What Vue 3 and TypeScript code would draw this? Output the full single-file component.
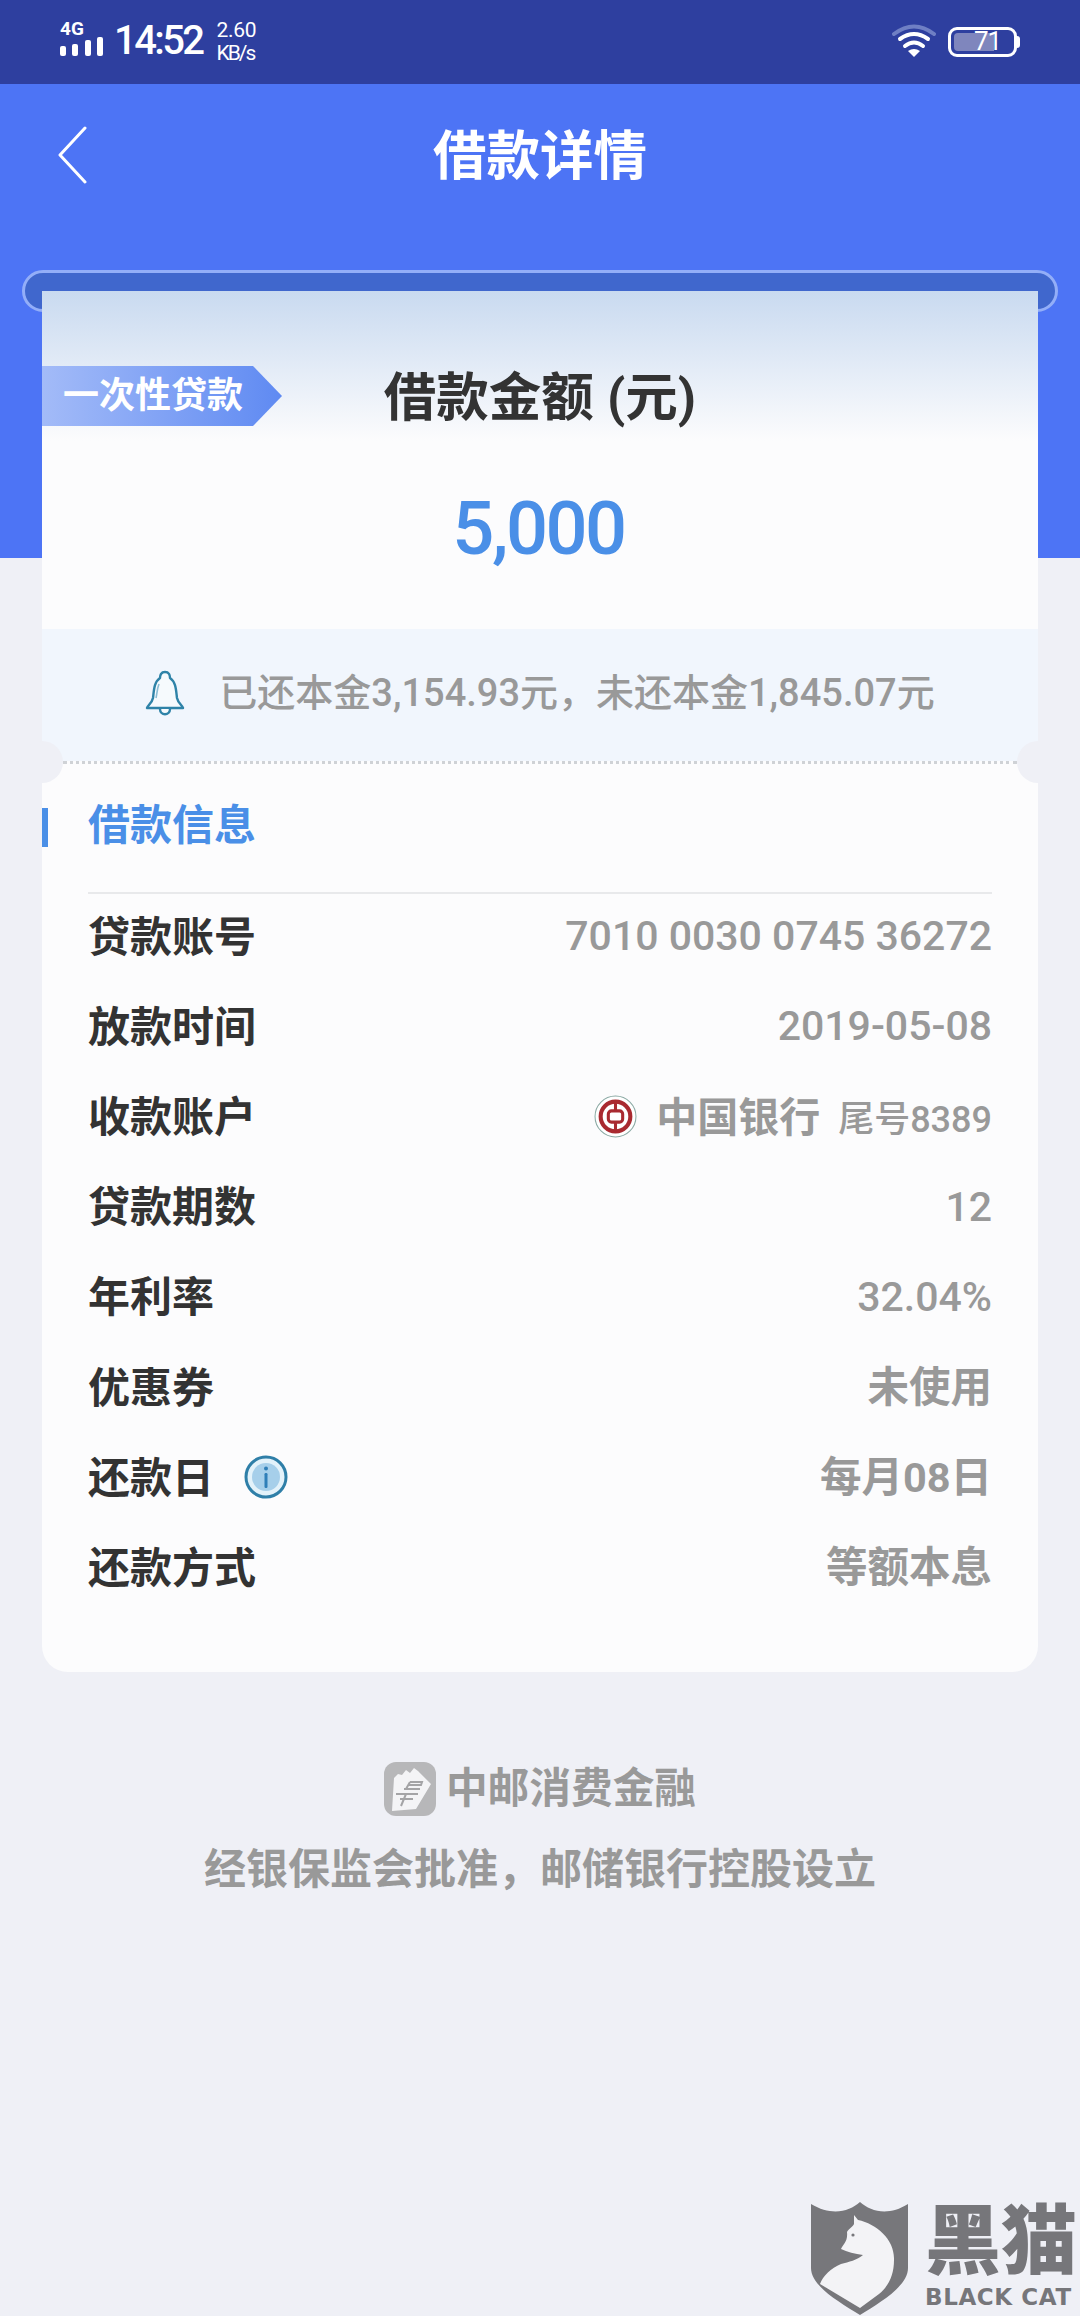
<template>
  <div class="page">
    <header class="hero">
      <div class="status">
        <div class="status__net">
          <span class="status__gen">4G</span>
          <div class="status__bars"><i v-for="n in 4" :key="n" :class="`bar bar--${n}`" /></div>
        </div>
        <span class="status__time">14:52</span>
        <div class="status__speed"><span>2.60</span><span class="status__unit">KB/s</span></div>
        <div class="status__right">
          <svg class="wifi" viewBox="0 0 44 36" fill="none" stroke="#fff" stroke-linecap="round">
            <path d="M2 10 Q22 -5 42 10" stroke="#6f7fc4" stroke-width="4" />
            <path d="M8 15 Q22 5 36 15" stroke-width="4" />
            <path d="M13 22 Q22 15 31 22" stroke-width="4" />
            <path d="M16 27 L22 33 L28 27 Q22 23 16 27 Z" fill="#fff" stroke="none" />
          </svg>
          <div class="battery">
            <div class="battery__fill" />
            <span class="battery__num">71</span>
          </div>
          <i class="battery__cap" />
        </div>
      </div>
      <nav class="nav">
        <svg class="nav__back" viewBox="0 0 30 58" fill="none">
          <path d="M28 2 L3 29 L28 56" stroke="#fff" stroke-width="3" stroke-linecap="round" stroke-linejoin="round" />
        </svg>
        <h1 class="nav__title">借款详情</h1>
      </nav>
      <div class="slot" />
    </header>

    <main class="card">
      <div class="summary">
        <div class="tag">一次性贷款</div>
        <p class="summary__label">借款金额 (元)</p>
        <p class="summary__amount">5,000</p>
      </div>

      <div class="notice">
        <svg class="notice__bell" viewBox="0 0 40 46" fill="#f6fafd" stroke="#2f83a8" stroke-width="2.4" stroke-linejoin="round">
          <path d="M20 2 C16 2 15 5 15 8 C9 12 9 20 8 28 C7 33 3 35 2 38 L38 38 C37 35 33 33 32 28 C31 20 31 12 25 8 C25 5 24 2 20 2 Z" />
          <path d="M15 39 C15 46 25 46 25 39" />
          <path d="M14 14 C12 19 12 24 11 28" fill="none" stroke="#8bbdd4" stroke-width="1.6" />
        </svg>
        <span class="notice__text">已还本金3,154.93元，未还本金1,845.07元</span>
      </div>

      <div class="perforation">
        <i class="perforation__hole perforation__hole--left" />
        <i class="perforation__hole perforation__hole--right" />
      </div>

      <section class="info">
        <h2 class="info__title">借款信息</h2>
        <ul class="rows">
          <li v-for="row in rows" :key="row.label" class="row">
            <span class="row__label">{{ row.label }}</span>
            <svg v-if="row.hint" class="row__hint" viewBox="0 0 44 44">
              <circle cx="22" cy="22" r="20" fill="#e3f2fa" stroke="#2f7fa8" stroke-width="3" />
              <circle cx="22" cy="22" r="14" fill="#a6cfea" />
              <rect x="20.5" y="18" width="3" height="15" rx="1.2" fill="#2f7fb8" />
              <circle cx="22" cy="13.5" r="2" fill="#2f7fb8" />
            </svg>
            <span v-if="row.bank" class="row__bank">
              <svg class="row__boc" viewBox="0 0 42 42" fill="none">
                <circle cx="21" cy="21" r="20" fill="#fff" stroke="#8aa9a3" stroke-width="1" />
                <circle cx="21" cy="21" r="14.5" stroke="#a92a30" stroke-width="4" />
                <rect x="14" y="15.5" width="14" height="11" rx="3" stroke="#a92a30" stroke-width="3" />
                <path d="M21 6 V15 M21 27 V36" stroke="#a92a30" stroke-width="3" />
              </svg>
              <span class="row__bank-name">中国银行</span>
              <span class="row__bank-tail">尾号8389</span>
            </span>
            <span v-else class="row__value" :class="{ 'row__value--cjk': row.cjk }">{{ row.value }}</span>
          </li>
        </ul>
      </section>
    </main>

    <footer class="foot">
      <div class="foot__brand">
        <svg class="foot__logo" viewBox="0 0 52 54">
          <rect width="52" height="54" rx="12" fill="#b7b7b9" />
          <path d="M10 16 L14 12 L18 13 L22 8 L26 11 L30 6 L34 9 L47 22 L32 47 L8 49 Z" fill="#f4f4f6" />
          <path d="M26 20 H38 L37 23 H25 M20 27 H36 M12 32 H34 M16 37 H29 M26 20 L22 27 M22 32 L17 44" stroke="#a4a4a6" stroke-width="2" fill="none" />
        </svg>
        <span>中邮消费金融</span>
      </div>
      <p class="foot__note">经银保监会批准，邮储银行控股设立</p>
    </footer>

    <div class="mark">
      <svg class="mark__shield" viewBox="0 0 98 114">
        <path d="M0 2 C20 14 38 10 49 0 C60 10 78 14 97 2 V66 C97 84 70 100 49 113 C28 100 0 84 0 66 Z" fill="#77777b" />
        <path d="M43 13 L47 18 C66 22 84 38 83 58 C83 72 78 84 68 92 L49 106 L9 82 C12 74 20 66 30 62 C38 60 46 58 52 53 C44 52 36 50 30 47 C32 42 37 40 36 30 C37 27 42 25 43 22 Z" fill="#f3f3f6" />
        <circle cx="42" cy="33" r="1.6" fill="#77777b" />
      </svg>
      <div class="mark__text">
        <span class="mark__cn">黑猫</span>
        <span class="mark__en">BLACK CAT</span>
      </div>
    </div>
  </div>
</template>

<script setup lang="ts">
interface InfoRow {
  label: string;
  value?: string;
  hint?: boolean;
  bank?: boolean;
  cjk?: boolean;
}

const rows: InfoRow[] = [
  { label: '贷款账号', value: '7010 0030 0745 36272' },
  { label: '放款时间', value: '2019-05-08' },
  { label: '收款账户', bank: true },
  { label: '贷款期数', value: '12' },
  { label: '年利率', value: '32.04%' },
  { label: '优惠券', value: '未使用', cjk: true },
  { label: '还款日', value: '每月08日', hint: true, cjk: true },
  { label: '还款方式', value: '等额本息', cjk: true },
];
</script>

<style>
html,
body {
  margin: 0;
  background: #eff0f6;
}
</style>

<style scoped>
.page {
  position: relative;
  width: 1080px;
  height: 2316px;
  overflow: hidden;
  background: #eff0f6;
  font-family: Roboto, "Noto Sans CJK SC", sans-serif;
}

.hero {
  position: relative;
  height: 558px;
  background: #4d74f5;
}

.status {
  display: flex;
  align-items: center;
  height: 84px;
  padding: 0 60px;
  box-sizing: border-box;
  background: #2e3f9f;
  color: #fff;
}
.status__net {
  display: flex;
  flex-direction: column;
  width: 43px;
  margin: 0 11px 8px 0;
}
.status__gen {
  font-size: 19px;
  font-weight: 700;
  line-height: 17px;
}
.status__bars {
  display: flex;
  justify-content: space-between;
  align-items: flex-end;
  height: 19px;
}
.bar {
  width: 6px;
  border-radius: 2px;
  background: #fff;
}
.bar--1 { height: 10px; }
.bar--2 { height: 12px; }
.bar--3 { height: 16px; }
.bar--4 { height: 19px; }
.status__time {
  margin-bottom: 4px;
  font-size: 40px;
  font-weight: 500;
  letter-spacing: -2.6px;
}
.status__speed {
  display: flex;
  flex-direction: column;
  margin-left: 14px;
  font-size: 21px;
  line-height: 23px;
  letter-spacing: -0.3px;
}
.status__unit {
  letter-spacing: -2px;
}
.status__right {
  display: flex;
  align-items: center;
  margin-left: auto;
}
.wifi {
  width: 44px;
  height: 36px;
  margin-right: 12px;
}
.battery {
  position: relative;
  width: 69px;
  height: 30px;
  box-sizing: border-box;
  padding: 3px;
  border: 3px solid #fff;
  border-radius: 9px;
}
.battery__fill {
  width: 40px;
  height: 100%;
  border-radius: 4px 0 0 4px;
  background: #7f86bd;
}
.battery__num {
  position: absolute;
  top: -4px;
  left: 23px;
  font-size: 26px;
  line-height: 30px;
  letter-spacing: -1px;
}
.battery__cap {
  width: 3px;
  height: 12px;
  border-radius: 0 3px 3px 0;
  background: #fff;
}

.nav {
  position: relative;
  display: flex;
  justify-content: center;
  align-items: center;
  height: 134px;
}
.nav__back {
  position: absolute;
  left: 57px;
  top: 42px;
  width: 30px;
  height: 58px;
}
.nav__title {
  margin: 0;
  color: #fff;
  font-size: 53.5px;
  font-weight: 700;
}

.slot {
  position: absolute;
  top: 270px;
  left: 22px;
  right: 22px;
  height: 42px;
  box-sizing: border-box;
  border: 3px solid #93aef8;
  border-radius: 21px;
  background: #4067cd;
}

.card {
  position: relative;
  width: 996px;
  height: 1381px;
  margin: -267px auto 0;
  border-radius: 0 0 26px 26px;
  background: #fcfcfd;
}

.summary {
  position: relative;
  height: 338px;
  background: linear-gradient(#c9daf0, #fcfcfd) top / 100% 150px no-repeat;
  text-align: center;
}
.tag {
  position: absolute;
  top: 75px;
  left: 0;
  width: 240px;
  height: 60px;
  padding-left: 21px;
  box-sizing: border-box;
  clip-path: polygon(0 0, 211px 0, 100% 50%, 211px 100%, 0 100%);
  background: linear-gradient(90deg, #a3bbf8, #5f8af2);
  color: #fff;
  font-size: 36px;
  font-weight: 700;
  line-height: 60px;
  text-align: left;
}
.summary__label {
  margin: 0;
  padding-top: 69px;
  color: #333;
  font-size: 52.5px;
  font-weight: 700;
  line-height: 76px;
}
.summary__amount {
  margin: 50px 3px 0 0;
  color: #4a8fe7;
  font-size: 74px;
  font-weight: 500;
  letter-spacing: -2.5px;
  line-height: 86px;
}

.notice {
  display: flex;
  align-items: center;
  justify-content: center;
  gap: 34px;
  height: 132px;
  padding: 0 0 4px;
  box-sizing: border-box;
  background: #f1f6fd;
  color: #999;
  font-size: 38px;
  font-weight: 500;
}
.notice__bell {
  width: 40px;
  height: 46px;
}
.notice__text {
  margin-bottom: 7px;
}

.perforation {
  position: relative;
  height: 0;
  margin: 0 21px;
  border-top: 3px dotted #cfd2d6;
}
.perforation__hole {
  position: absolute;
  top: -23px;
  width: 42px;
  height: 42px;
  border-radius: 50%;
  background: #eff0f6;
}
.perforation__hole--left { left: -42px; }
.perforation__hole--right { right: -42px; }

.info {
  padding: 0 46px;
}
.info__title {
  position: relative;
  margin: 0;
  padding: 33px 0 37px;
  border-bottom: 2px solid #e8e9eb;
  color: #4a8fe7;
  font-size: 42px;
  font-weight: 700;
  line-height: 58px;
}
.info__title::before {
  content: "";
  position: absolute;
  top: 44px;
  left: -46px;
  width: 6px;
  height: 39px;
  background: #4a8fe7;
}

.rows {
  margin: -3px 0 0;
  padding: 0;
  list-style: none;
}
.row {
  display: flex;
  align-items: center;
  height: 90.2px;
}
.row__label {
  margin-bottom: 6px;
  color: #333;
  font-size: 42px;
  font-weight: 700;
}
.row__hint {
  width: 44px;
  height: 44px;
  margin-left: 30px;
}
.row__value,
.row__bank {
  margin-left: auto;
  color: #999;
  font-size: 41px;
  font-weight: 500;
}
.row__value--cjk {
  margin-bottom: 6px;
  font-size: 41.5px;
  font-weight: 700;
}
.row__bank {
  display: flex;
  align-items: center;
}
.row__boc {
  width: 43px;
  height: 43px;
  margin-right: 19px;
}
.row__bank-name {
  margin-bottom: 4px;
  font-size: 41px;
  font-weight: 700;
}
.row__bank-tail {
  margin-left: 18px;
  font-size: 36px;
}

.foot {
  display: flex;
  flex-direction: column;
  align-items: center;
  margin-top: 90px;
  color: #999;
  font-weight: 700;
}
.foot__brand {
  display: flex;
  align-items: center;
  gap: 10px;
  font-size: 41.7px;
  line-height: 54px;
}
.foot__logo {
  width: 52px;
  height: 54px;
}
.foot__note {
  margin: 24px 0 0;
  font-size: 42px;
  line-height: 60px;
}

.mark {
  position: absolute;
  right: 3px;
  bottom: 0;
  display: flex;
  align-items: flex-start;
  gap: 16px;
  color: #76767a;
}
.mark__shield {
  width: 98px;
  height: 114px;
}
.mark__text {
  display: flex;
  flex-direction: column;
}
.mark__cn {
  font-size: 76px;
  font-weight: 900;
  line-height: 80px;
}
.mark__en {
  font-family: "DejaVu Sans", sans-serif;
  margin-top: 2px;
  font-size: 23px;
  font-weight: 700;
  line-height: 26px;
  letter-spacing: 0.6px;
  white-space: nowrap;
}
</style>
